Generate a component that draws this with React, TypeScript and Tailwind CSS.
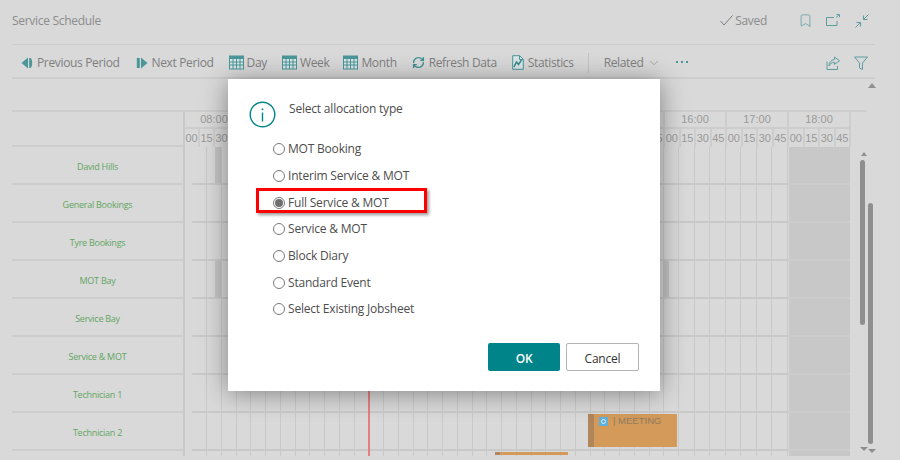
import React from "react";
import { ChevronDown, Bookmark, RefreshCw } from "lucide-react";

const ui = { fontFamily: '"Open Sans", "Noto Sans", sans-serif' };
const arial = { fontFamily: '"Liberation Sans", Arial, sans-serif' };

const resources = [
    "David Hills",
    "General Bookings",
    "Tyre Bookings",
    "MOT Bay",
    "Service Bay",
    "Service & MOT",
    "Technician 1",
    "Technician 2",
];

const options = [
    "MOT Booking",
    "Interim Service & MOT",
    "Full Service & MOT",
    "Service & MOT",
    "Block Diary",
    "Standard Event",
    "Select Existing Jobsheet",
];

const quarters = ["00", "15", "30", "45"];
const earlyHours = ["08:00", "09:00", "10:00", "11:00", "12:00", "13:00", "14:00", "15:00"];
const lateHours = ["16:00", "17:00", "18:00"];

const CalendarIcon = () => (
    <svg width="15" height="15" viewBox="0 0 15 15" className="shrink-0">
        <rect x="0.5" y="1" width="14" height="13" fill="#dbe7e7" stroke="#4a9699" />
        <rect x="0.5" y="1" width="14" height="3" fill="#4a9699" />
        <path d="M1 7h13M1 10h13M4 4v10M7.5 4v10M11 4v10" stroke="#4a9699" strokeWidth="1" fill="none" />
    </svg>
);

const PrevIcon = () => (
    <svg width="12" height="12" viewBox="0 0 12 12" className="shrink-0">
        <path d="M7 0.500v11L0.500 6z" fill="#4a9699" />
        <path d="M8.200 1h1.500c2 2.500 2 7.500 0 10H8.200z" fill="#4a9699" />
    </svg>
);

const NextIcon = () => (
    <svg width="12" height="12" viewBox="0 0 12 12" className="shrink-0">
        <path d="M5 0.500v11L11.500 6z" fill="#4a9699" />
        <path d="M3.800 1H0.800v10h3z" fill="#4a9699" />
    </svg>
);

const StatsIcon = () => (
    <svg width="12" height="15" viewBox="0 0 12 15" className="shrink-0">
        <path d="M0.7 0.7h7l3.6 3.6v10H0.7z" fill="#dbe7e7" stroke="#4a9699" />
        <path d="M7.5 1v3.5H11" fill="none" stroke="#4a9699" />
        <path d="M2 12l2.5-5 2 2.5L9.5 5" fill="none" stroke="#3c8c8f" strokeWidth="1.6" />
    </svg>
);

const ShareIcon = () => (
    <svg width="14" height="14" viewBox="0 0 14 14" fill="none" stroke="#5d9c9f" className="shrink-0">
        <path d="M1 5.5v8h10.5V10" />
        <path d="M8.5 1l5 3.7-5 3.7V6.3C6 6.3 4 7.5 3 10c0-3.500 2-6 5.500-6.500z" />
    </svg>
);

const FilterIcon = () => (
    <svg width="14" height="14" viewBox="0 0 14 14" fill="none" stroke="#5d9c9f" className="shrink-0">
        <path d="M0.5 1h13L8.500 7v6.500l-3-1.500V7z" />
    </svg>
);

const OpenIcon = () => (
    <svg width="14" height="13" viewBox="0 0 14 13" fill="none" stroke="#5d9c9f" className="shrink-0">
        <path d="M8 3.500H0.500v8h10.500V7" />
        <path d="M10 3.500L13 0.800M10.500 0.500h3v2.700" />
    </svg>
);

const CollapseIcon = () => (
    <svg width="14" height="14" viewBox="0 0 14 14" fill="none" stroke="#5d9c9f" className="shrink-0">
        <path d="M13.500 0.500L8.500 5.500M8.500 1.500v4h4" />
        <path d="M0.500 13.500L5.500 8.500M1.500 8.500h4v4" />
    </svg>
);

const SavedCheck = () => (
    <svg width="13" height="11" viewBox="0 0 13 11" fill="none" stroke="#7d7d7d" className="shrink-0">
        <path d="M0.500 6l3.500 4L12.500 0.500" />
    </svg>
);

const InfoIcon = () => (
    <svg width="27" height="27" viewBox="0 0 27 27" fill="none" className="shrink-0">
        <circle cx="13.500" cy="13.500" r="12.300" stroke="#00868a" strokeWidth="1.400" />
        <rect x="12.800" y="11.500" width="1.400" height="9" fill="#00868a" />
        <rect x="12.700" y="7.500" width="1.600" height="1.700" fill="#00868a" />
    </svg>
);

const ToolbarItem: React.FC<{ icon: React.ReactNode; label: string; className: string }> = ({ icon, label, className }) => (
    <div className={`flex items-center ${className}`}>
        {icon}
        <span>{label}</span>
    </div>
);

const QuarterCells: React.FC<{ wide?: boolean }> = ({ wide }) => (
    <>
        {quarters.map((q) => (
            <div
                key={q}
                className={`h-full flex items-center justify-center border-r-2 border-[#cdcdcd] ${wide ? "w-[15.5px]" : "w-[15px]"}`}
            >
                {q}
            </div>
        ))}
    </>
);

const GridRow: React.FC<{ height?: string; lined?: boolean }> = ({ height = "h-[38px]", lined = true }) => {
    const line = lined ? "border-b-2" : "";
    return (
        <div className={`flex ${height}`}>
            <div className="w-[7px]" />
            <div className={`w-[15px] border-r border-[#c9c9c9] ${line}`} />
            {Array.from({ length: 32 }).map((_, i) => (
                <div key={i} className={`w-[14.75px] border-r border-[#c9c9c9] ${line}`} />
            ))}
            {Array.from({ length: 7 }).map((_, i) => (
                <div key={i} className={`w-[15.5px] border-r border-[#c9c9c9] ${line}`} />
            ))}
            <div className={`w-[1px] ${line} border-[#c9c9c9]`} />
            <div className={`w-[61px] bg-[#c8c8c8] ${line} border-[#cdcdcd]`} />
        </div>
    );
};

const App: React.FC = () => {
    return (
        <div className="relative w-[900px] h-[460px] overflow-hidden bg-[#d9d9d9]" style={ui}>
            {/* Page header */}
            <div className="ml-[12px] mr-[25px] h-[45px] flex items-center border-b border-[#cccccc] text-[#8c8c8c] text-[12px] tracking-[-0.3px]">
                <span className="mb-[3px]">Service Schedule</span>
                <div className="ml-auto mb-[3px] flex items-center">
                    <SavedCheck />
                    <span className="ml-[2px]">Saved</span>
                    <Bookmark size={15} strokeWidth={1.2} className="ml-[31px] text-[#5d9c9f]" />
                    <div className="ml-[13px]"><OpenIcon /></div>
                    <div className="ml-[15px] mr-[6px]"><CollapseIcon /></div>
                </div>
            </div>

            {/* Action bar */}
            <div className="ml-[12px] mr-[25px] h-[34px] pt-[3px] flex items-center border-b-2 border-[#cdcdcd] text-[#7f7f7f] text-[12px] tracking-[-0.35px]">
                <ToolbarItem icon={<PrevIcon />} label="Previous Period" className="ml-[9px] gap-[4px]" />
                <ToolbarItem icon={<NextIcon />} label="Next Period" className="ml-[16px] gap-[4px]" />
                <ToolbarItem icon={<CalendarIcon />} label="Day" className="ml-[15px] gap-[3px]" />
                <ToolbarItem icon={<CalendarIcon />} label="Week" className="ml-[15px] gap-[3px]" />
                <ToolbarItem icon={<CalendarIcon />} label="Month" className="ml-[14px] gap-[3px]" />
                <div className="ml-[15px] flex items-center gap-[4px]">
                    <RefreshCw size={13} strokeWidth={2.6} className="text-[#3f9093]" />
                    <span>Refresh Data</span>
                </div>
                <ToolbarItem icon={<StatsIcon />} label="Statistics" className="ml-[15px] gap-[4px]" />
                <div className="ml-[14px] w-px h-[20px] bg-[#c4c4c4]" />
                <span className="ml-[15px]">Related</span>
                <ChevronDown size={14} strokeWidth={1} className="ml-[4px] text-[#7f7f7f]" />
                <div className="ml-[15px] flex gap-[3px] mb-[2px]">
                    <span className="w-[2px] h-[2px] bg-[#4a9699]" />
                    <span className="w-[2px] h-[2px] bg-[#4a9699]" />
                    <span className="w-[2px] h-[2px] bg-[#4a9699]" />
                </div>
                <div className="ml-auto flex items-center gap-[14px] mr-[7px]">
                    <ShareIcon />
                    <FilterIcon />
                </div>
            </div>

            {/* Schedule */}
            <div className="relative ml-[12px] mt-[31px] w-[855px] border-t-[2px] border-[#cdcdcd] flex">
                <div className="w-[171px] shrink-0">
                    <div className="h-[35px] border-b-2 border-[#cdcdcd]" />
                    {resources.map((name) => (
                        <div
                            key={name}
                            className="h-[38px] pt-[3px] flex items-center justify-center border-b-2 border-[#cdcdcd] text-[9px] tracking-[-0.25px] text-[#62a562]"
                        >
                            {name}
                        </div>
                    ))}
                    <div className="h-[5px]" />
                </div>
                <div className="relative border-l-2 border-[#c9c9c9] flex-1 min-w-0">
                    <div className="h-[35px] text-[11px] text-[#999999]" style={arial}>
                        <div className="flex h-[17px]">
                            {earlyHours.map((h) => (
                                <div key={h} className="w-[60px] flex items-center justify-center border-r-2 border-b-2 border-[#cdcdcd]">
                                    {h}
                                </div>
                            ))}
                            {lateHours.map((h) => (
                                <div key={h} className="w-[62px] flex items-center justify-center border-r-2 border-b-2 border-[#cdcdcd]">
                                    {h}
                                </div>
                            ))}
                        </div>
                        <div className="flex h-[18px]">
                            {earlyHours.map((h) => (
                                <QuarterCells key={h} />
                            ))}
                            {lateHours.map((h) => (
                                <QuarterCells key={h} wide />
                            ))}
                        </div>
                    </div>
                    <div className="relative">
                        {resources.map((name) => (
                            <GridRow key={name} />
                        ))}
                        <GridRow height="h-[5px]" lined={false} />

                        {/* Blocked periods */}
                        <div className="absolute left-[30px] top-0 w-[6px] h-[36px] bg-[#c4c4c4]" />
                        <div className="absolute left-[30px] top-[114px] w-[6px] h-[36px] bg-[#c4c4c4]" />
                        <div className="absolute left-[478px] top-[114px] w-[6px] h-[36px] bg-[#c4c4c4]" />

                        {/* Current time */}
                        <div className="absolute left-[183px] top-0 bottom-0 w-[2px] bg-[#e47f7f]" />

                        {/* Bookings */}
                        <div
                            className="absolute left-[403px] top-[267px] w-[89px] h-[33px] flex bg-[#d39a5a] text-[9.5px] text-[#8f7a5f]"
                            style={arial}
                        >
                            <div className="w-[6px] bg-[#b0855a]" />
                            <div className="ml-[5px] mt-[3px] w-[9px] h-[9px] bg-[#5fb0dc] flex items-center justify-center">
                                <span className="w-[5px] h-[5px] border border-[#e4eef4] rounded-full" />
                            </div>
                            <span className="ml-[5px] leading-[14px]">| MEETING</span>
                        </div>
                        <div className="absolute left-[310px] top-[305px] w-[73px] h-[3px] flex bg-[#d39a5a]">
                            <div className="w-[5px] bg-[#b0855a]" />
                        </div>
                    </div>
                </div>
            </div>

            {/* Scrollbars */}
            <div className="absolute left-[860px] top-[160px] w-[5px] h-[165px] rounded-full bg-[#8f8f8f]" />
            <div className="absolute left-[868px] top-[203px] w-[5px] h-[241px] rounded-full bg-[#8f8f8f]" />
            <div className="absolute left-[861px] top-[152px] border-x-[3px] border-b-[4px] border-x-transparent border-b-[#8f8f8f]" />
            <div className="absolute left-[868px] top-[83px] border-x-[4px] border-b-[5px] border-x-transparent border-b-[#8f8f8f]" />
            <div className="absolute left-[860px] top-[447px] border-x-[4px] border-t-[4px] border-x-transparent border-t-[#8f8f8f]" />
            <div className="absolute left-[868px] top-[449px] border-x-[4px] border-t-[4px] border-x-transparent border-t-[#8f8f8f]" />

            {/* Dialog */}
            <div className="absolute left-[228px] top-[79px] w-[432px] h-[312px] flex flex-col bg-white shadow-[0_2px_24px_rgba(0,0,0,0.4)] text-[#4d4d4d] text-[12px] tracking-[-0.2px]">
                <div className="flex pl-[21px] pt-[22px] h-[57px]">
                    <InfoIcon />
                    <span className="ml-[13px] leading-[16px]">Select allocation type</span>
                </div>
                <div className="ml-[45px]">
                    {options.map((opt, i) => (
                        <div key={opt} className="h-[26.7px] flex items-center">
                            <span className="w-[12px] h-[12px] shrink-0 rounded-full border border-[#7a7a7a] flex items-center justify-center">
                                {i === 2 && <span className="w-[8px] h-[8px] rounded-full bg-[#6e6e6e]" />}
                            </span>
                            <span className="ml-[3px]">{opt}</span>
                        </div>
                    ))}
                </div>
                <div className="mt-auto mb-[20px] mr-[21px] flex justify-end gap-[6px]">
                    <button className="w-[72px] h-[28px] pt-[3px] rounded-[2px] bg-[#008489] text-white font-semibold">OK</button>
                    <button className="w-[73px] h-[28px] pt-[3px] rounded-[2px] border border-[#b3b3b3] bg-white text-[#333333] font-medium">Cancel</button>
                </div>

                {/* Screenshot annotation */}
                <div className="absolute left-[28px] top-[109px] w-[171px] h-[25px] border-[3px] border-[#ff0000] shadow-[2px_2px_3px_rgba(0,0,0,0.4)]" />
            </div>
        </div>
    );
};

export default App;
